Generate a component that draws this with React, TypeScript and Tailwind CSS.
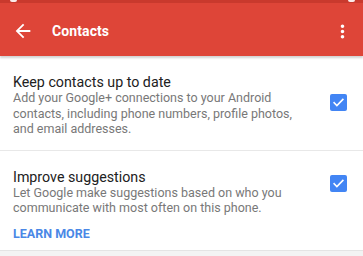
import React from 'react';

// 设置页：联系人同步选项
const FONT = { fontFamily: 'Roboto, "Noto Sans", Arial, sans-serif' };

function CheckBox() {
  return (
    <div className="w-[17px] h-[17px] rounded-[2px] bg-[#4285f4] flex items-center justify-center shrink-0">
      <svg width="13" height="13" viewBox="0 0 24 24" fill="none">
        <path d="M4 12.5l5 5L20 6.5" stroke="white" strokeWidth="3" strokeLinecap="square" />
      </svg>
    </div>
  );
}

export default function App() {
  return (
    <div className="w-[363px] h-[256px] bg-white overflow-hidden flex flex-col" style={FONT}>
      {/* 状态栏（裁掉的一截） */}
      <div className="h-[3px] bg-[#c9392d] flex items-start shrink-0">
        <div className="ml-[10px] w-[7px] h-[2px] bg-white/90 rounded-b-sm" />
        <div className="ml-auto mr-[8px] w-[7px] h-[2px] bg-white/90 rounded-b-sm" />
      </div>

      {/* 工具栏 */}
      <div className="h-[53px] bg-[#de4538] flex items-center pt-[3px] shadow-[0_2px_2px_rgba(0,0,0,0.18)] relative z-10 shrink-0">
        <svg className="ml-[12px]" width="22" height="22" viewBox="0 0 24 24" fill="white">
          <path d="M20 11H7.83l5.59-5.59L12 4l-8 8 8 8 1.41-1.41L7.83 13H20v-2z" />
        </svg>
        <span className="ml-[18px] text-white text-[14px] font-bold tracking-[0.1px]">Contacts</span>
        <svg className="ml-auto mr-[10px]" width="21" height="21" viewBox="0 0 24 24" fill="white">
          <path d="M12 8c1.1 0 2-.9 2-2s-.9-2-2-2-2 .9-2 2 .9 2 2 2zm0 2c-1.1 0-2 .9-2 2s.9 2 2 2 2-.9 2-2-.9-2-2-2zm0 6c-1.1 0-2 .9-2 2s.9 2 2 2 2-.9 2-2-.9-2-2-2z" />
        </svg>
      </div>

      {/* 选项一 */}
      <div className="flex items-start pl-[13px] pr-[16px] pt-[18px] pb-[13px] border-b border-[#e8e8e8]">
        <div className="flex-1">
          <div className="text-[14.25px] leading-[16px] text-[#212121]">Keep contacts up to date</div>
          <div className="text-[12.5px] leading-[15.5px] text-[#787878]">
            Add your Google+ connections to your Android
            <br />
            contacts, including phone numbers, profile photos,
            <br />
            and email addresses.
          </div>
        </div>
        <div className="mt-[20px]">
          <CheckBox />
        </div>
      </div>

      {/* 选项二 */}
      <div className="flex items-start pl-[13px] pr-[16px] pt-[18px] pb-[9px] border-b border-[#e4e4e4]">
        <div className="flex-1">
          <div className="text-[14.25px] leading-[16px] text-[#212121]">Improve suggestions</div>
          <div className="text-[12.5px] leading-[15.5px] text-[#787878]">
            Let Google make suggestions based on who you
            <br />
            communicate with most often on this phone.
          </div>
          <div className="mt-[11px] text-[12.5px] leading-[14px] font-bold text-[#4a88e6]">LEARN MORE</div>
        </div>
        <div className="mt-[6px]">
          <CheckBox />
        </div>
      </div>

      <div className="flex-1 bg-[#f3f3f3]" />
    </div>
  );
}
